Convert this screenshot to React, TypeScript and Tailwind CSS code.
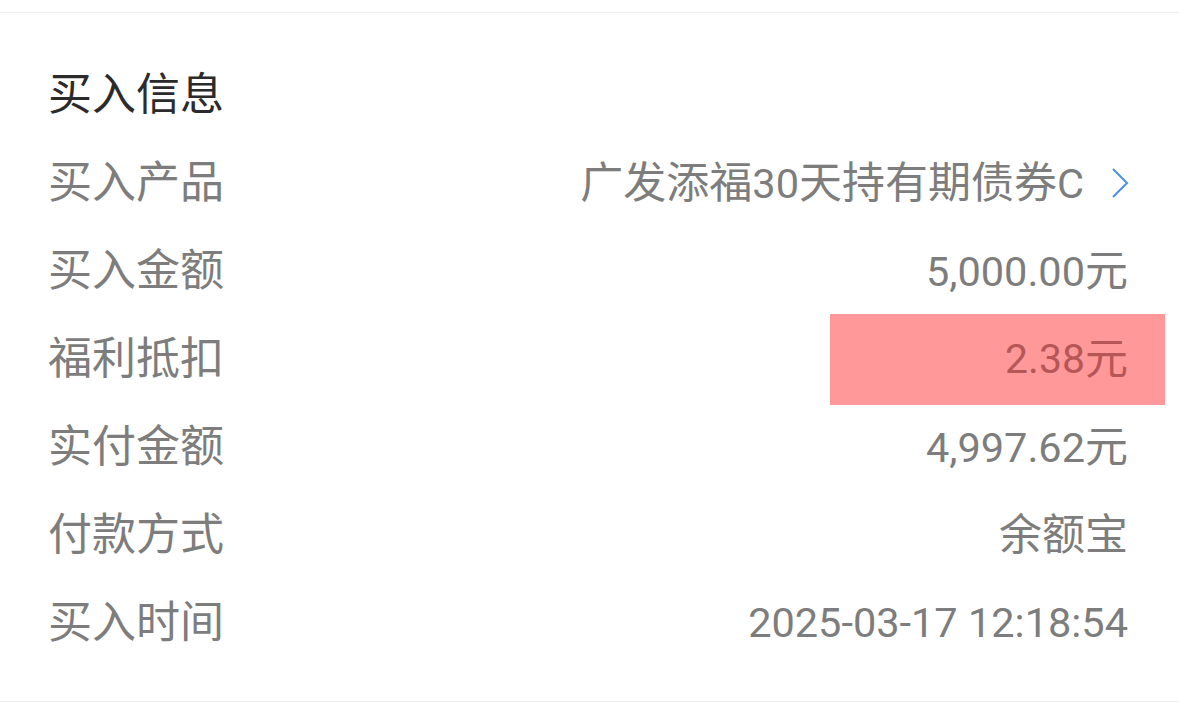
import React from "react";

const rows: { label: string; value: string; kind?: "link" | "hl" }[] = [
  { label: "买入产品", value: "广发添福30天持有期债券C", kind: "link" },
  { label: "买入金额", value: "5,000.00元" },
  { label: "福利抵扣", value: "2.38元", kind: "hl" },
  { label: "实付金额", value: "4,997.62元" },
  { label: "付款方式", value: "余额宝" },
  { label: "买入时间", value: "2025-03-17 12:18:54" },
];

function Mixed({ text }: { text: string }) {
  const parts = text.match(/[\u4e00-\u9fff]+|[^\u4e00-\u9fff]+/g) || [];
  return (
    <>
      {parts.map((p, i) =>
        /[\u4e00-\u9fff]/.test(p) ? (
          <span key={i} className="text-[43px]">
            {p}
          </span>
        ) : (
          <span key={i}>{p}</span>
        )
      )}
    </>
  );
}

export default function App() {
  return (
    <div
      className="w-[1179px] h-[727px] bg-white overflow-hidden pt-[12px]"
      style={{ fontFamily: 'Roboto, "Noto Sans CJK SC", sans-serif' }}
    >
      <div className="border-t border-b border-[#ececec] pt-[38px] pb-[34px] pl-[48px] pr-[51px]">
        <div className="h-[88px] flex items-center text-[44px] text-[#2b2b2b] leading-none">
          买入信息
        </div>
        {rows.map((r) => (
          <div key={r.label} className="h-[88px] flex items-center justify-between">
            <span className="text-[44px] text-[#7d7d7d] leading-none">{r.label}</span>
            {r.kind === "hl" ? (
              <span className="w-[335px] h-[91px] -mr-[37px] pr-[37px] bg-[#ff9999] flex items-center justify-end text-[41px] text-[#b75657] leading-none">
                <Mixed text={r.value} />
              </span>
            ) : r.kind === "link" ? (
              <span className="flex items-center text-[41.5px] text-[#7d7d7d] leading-none">
                <span>
                  <Mixed text={r.value} />
                </span>
                <svg width="20" height="32" viewBox="0 0 20 32" className="ml-[26px] mr-[-2px]">
                  <path d="M3 2 L17 16 L3 30" fill="none" stroke="#4a8fe6" strokeWidth="2" />
                </svg>
              </span>
            ) : (
              <span className="text-[41.5px] text-[#7d7d7d] leading-none">
                <Mixed text={r.value} />
              </span>
            )}
          </div>
        ))}
      </div>
    </div>
  );
}
